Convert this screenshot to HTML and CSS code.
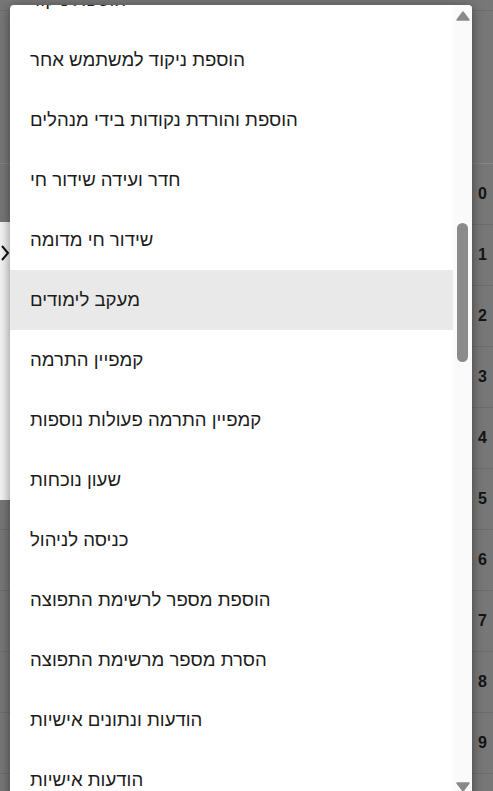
FILE: index.html
```html
<!DOCTYPE html>
<html lang="he">
<head>
<meta charset="utf-8">
<title>Menu</title>
<link rel="stylesheet" href="styles.css">
</head>
<body>
<div class="page">
  <div class="topbar"></div>
  <div class="header"></div>
  <div class="row"><span class="num">0</span></div>
  <div class="row"><span class="num">1</span></div>
  <div class="row"><span class="num">2</span></div>
  <div class="row"><span class="num">3</span></div>
  <div class="row"><span class="num">4</span></div>
  <div class="row"><span class="num">5</span></div>
  <div class="row"><span class="num">6</span></div>
  <div class="row"><span class="num">7</span></div>
  <div class="row"><span class="num">8</span></div>
  <div class="row"><span class="num">9</span></div>
</div>

<div class="side-panel">
  <svg class="chev" width="10" height="18" viewBox="0 0 10 18"><polyline points="2,2 8,9 2,16" fill="none" stroke="#111" stroke-width="2"/></svg>
</div>

<div class="menu">
  <ul class="items">
    <li class="item">הוספת ניקוד</li>
    <li class="item">הוספת ניקוד למשתמש אחר</li>
    <li class="item">הוספת והורדת נקודות בידי מנהלים</li>
    <li class="item">חדר ועידה שידור חי</li>
    <li class="item">שידור חי מדומה</li>
    <li class="item active">מעקב לימודים</li>
    <li class="item">קמפיין התרמה</li>
    <li class="item">קמפיין התרמה פעולות נוספות</li>
    <li class="item">שעון נוכחות</li>
    <li class="item">כניסה לניהול</li>
    <li class="item">הוספת מספר לרשימת התפוצה</li>
    <li class="item">הסרת מספר מרשימת התפוצה</li>
    <li class="item">הודעות ונתונים אישיות</li>
    <li class="item">הודעות אישיות</li>
  </ul>
  <div class="scrollbar">
    <svg class="arrow up" width="14" height="10" viewBox="0 0 14 10"><path d="M7 1 L13 9 H1 Z" fill="#8a8a8a" stroke="#8a8a8a" stroke-linejoin="round" stroke-width="1.5"/></svg>
    <div class="thumb"></div>
    <svg class="arrow down" width="14" height="10" viewBox="0 0 14 10"><path d="M1 1 H13 L7 9 Z" fill="#8a8a8a" stroke="#8a8a8a" stroke-linejoin="round" stroke-width="1.5"/></svg>
  </div>
</div>
</body>
</html>
```
FILE: styles.css
```css
html, body {
  margin: 0;
  padding: 0;
  height: 100%;
  overflow: hidden;
}
body {
  background: #777777;
  font-family: "Liberation Sans", Arial, "Noto Sans", sans-serif;
}
.page {
  display: flex;
  flex-direction: column;
}
.topbar {
  height: 10px;
  border-bottom: 1px solid #6c6c6c;
}
.header {
  height: 152px;
  border-bottom: 1px solid #858585;
}
.row {
  height: 60px;
  border-bottom: 1px solid #6c6c6c;
  display: flex;
  align-items: center;
  justify-content: flex-end;
  padding-right: 4px;
}
.num {
  font-weight: bold;
  font-size: 16px;
  color: #141414;
  width: 11px;
}
.side-panel {
  position: absolute;
  left: 0;
  top: 222px;
  width: 40px;
  height: 278px;
  background: linear-gradient(to right, #f4f4f4, #e4e4e4);
}
.chev {
  position: absolute;
  left: 0;
  top: 22px;
}
.menu {
  position: absolute;
  left: 10px;
  top: 5px;
  width: 462px;
  height: 800px;
  background: #ffffff;
  border-radius: 4px;
  box-shadow: 0 2px 12px rgba(0,0,0,0.45);
  overflow: hidden;
  display: flex;
}
.items {
  list-style: none;
  margin: -35px 0 0 0;
  padding: 0;
  flex: 1;
}
.item {
  height: 60px;
  line-height: 60px;
  padding-left: 20px;
  font-size: 18.6px;
  color: #1c1c1c;
  white-space: nowrap;
}
.item.active {
  background: #e9e9e9;
}
.scrollbar {
  width: 19px;
  background: #fafafa;
  position: relative;
}
.arrow {
  position: absolute;
  left: 3px;
}
.arrow.up { top: 6px; }
.arrow.down { top: 777px; }
.thumb {
  position: absolute;
  left: 4px;
  top: 218px;
  width: 11px;
  height: 139px;
  border-radius: 6px;
  background: #8b8b8b;
}
```
